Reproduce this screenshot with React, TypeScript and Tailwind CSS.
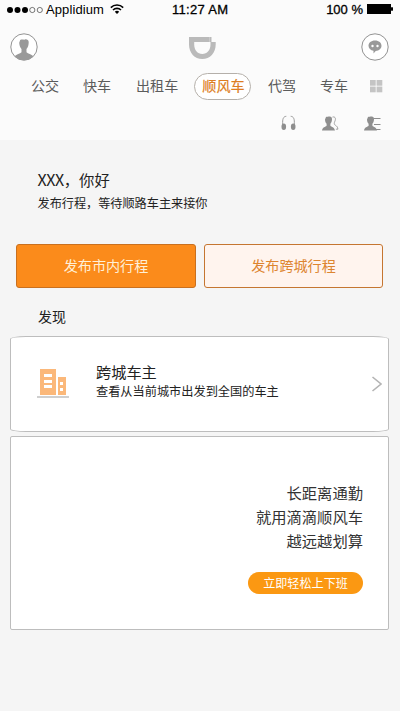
import React from "react";

const cjk = "font-['Noto_Sans_CJK_SC',sans-serif]";
const latin = "font-['Liberation_Sans',Arial,sans-serif]";

function StatusBar() {
  return (
    <div className={`flex h-[19px] items-center pl-[7px] pr-[7px] text-black ${latin}`}>
      <svg width="36" height="8" viewBox="0 0 36 8">
        <circle cx="3" cy="4" r="3" />
        <circle cx="10.5" cy="4" r="3" />
        <circle cx="18" cy="4" r="3" />
        <circle cx="25.3" cy="4" r="2.6" fill="none" stroke="#222" strokeWidth=".6" />
        <circle cx="32.8" cy="4" r="2.6" fill="none" stroke="#222" strokeWidth=".6" />
      </svg>
      <span className="ml-[3px] w-[58px] whitespace-nowrap text-[13px] leading-[19px] tracking-[0.1px]">Applidium</span>
      <svg className="ml-[6px] mb-[1px]" width="14" height="10" viewBox="0 0 14 10" fill="none" stroke="#000" strokeWidth="1.6">
        <path d="M.8 3.6a8.8 8.8 0 0 1 12.4 0" />
        <path d="M3 6a5.7 5.7 0 0 1 8 0" />
        <path d="M7 10 4.8 7.8a3.1 3.1 0 0 1 4.4 0z" fill="#000" stroke="none" />
      </svg>
      <span className="ml-[48px] w-[57px] whitespace-nowrap text-[13px] leading-[19px] tracking-[0.3px] [-webkit-text-stroke:0.3px_#000]">11:27 AM</span>
      <span className="ml-auto whitespace-nowrap text-[13px] leading-[19px] [-webkit-text-stroke:0.3px_#000]">100 %</span>
      <svg className="ml-[4px] mb-[1px]" width="26" height="10" viewBox="0 0 26 10">
        <rect x=".5" y=".5" width="23" height="9" stroke="#000" />
        <rect x="24" y="3.3" width="2" height="3.4" />
      </svg>
    </div>
  );
}

function TopBar() {
  return (
    <div className="flex h-[55px] items-center pl-[10px] pr-[11px]">
      <svg width="28" height="28" viewBox="0 0 28 28">
        <circle cx="14" cy="14" r="13.2" fill="#fff" stroke="#777" strokeWidth=".8" />
        <path d="M10.200 7c2-1 3.600.2 4.600-.4 1.400-.8 4 .2 3.900 2.600 0 3-.8 5.200-2.200 6.800v3.200c1.500 1.700 4.900 1.700 6.900 4a13.200 13.200 0 0 1-18.800 0c2-2.300 5.400-2.300 6.900-4V16c-1.400-1.600-2.200-3.800-2.300-6.200z" fill="#999" />
      </svg>
      <svg className="ml-[151px] mt-[2px]" width="27" height="22" viewBox="0 0 27 22" fill="#bababa">
        <path d="M0 0H20.500V5H5.200V7.500C5.200 13 8.500 17 13.300 17S21.500 13 21.500 7.500V5H26.700V7.500C26.700 16 21 22 13.300 22S0 16 0 7.500Z" />
        <path d="M20.500 0H22.500V5H20.500z" />
      </svg>
      <svg className="ml-auto" width="28" height="28" viewBox="0 0 28 28">
        <circle cx="14" cy="14" r="13.2" fill="#fff" stroke="#777" strokeWidth=".8" />
        <path d="M14 7.500c4 0 6.500 2.300 6.500 5.200 0 2.700-2.400 5-5.800 5.200L12.500 20.500v-2.700C9.500 17.300 7.500 15.200 7.500 12.700 7.500 9.800 10 7.500 14 7.500z" fill="#999" />
        <circle cx="11.500" cy="13" r="1.200" fill="#fff" /><circle cx="16.500" cy="13" r="1.200" fill="#fff" />
      </svg>
    </div>
  );
}

function Tabs() {
  return (
    <nav className="flex h-[24px] items-center pl-[31px] text-[14.100px] leading-[24px] whitespace-nowrap text-[#5c5c5c]">
      <span className="w-[52px] pb-[2px]">公交</span>
      <span className="w-[53px] pb-[2px]">快车</span>
      <span className="w-[58px] pb-[2px]">出租车</span>
      <span className="flex h-[27px] w-[57px] shrink-0 items-center justify-center rounded-full border border-[#b5b0aa] bg-white pb-[2px] pl-[2px] text-[#dd7d22] [-webkit-text-stroke:0.2px_#dd7d22]">顺风车</span>
      <span className="ml-[17px] w-[52px] pb-[2px]">代驾</span>
      <span className="w-[50px] pb-[2px]">专车</span>
      <svg width="13" height="13" viewBox="0 0 13 13" fill="#c4c4c4">
        <rect width="5.700" height="5.700" /><rect x="6.600" width="5.700" height="5.700" />
        <rect y="6.600" width="5.700" height="5.700" /><rect x="6.600" y="6.600" width="5.700" height="5.700" />
      </svg>
    </nav>
  );
}

const bust = "M4 1c1.200-.6 1.800 0 2.800-.4C8.800 0 10.200 1.300 10 3.500c-.1 2-.7 3.300-1.600 4.200v2c1 1.300 4 1.300 4.600 4.800H0c.5-3.500 3.400-3.500 4.600-4.800v-2C3.700 6.800 3 5.500 3 3.500z";

function ToolIcons() {
  return (
    <div className="flex h-[42px] items-center justify-end pr-[19px] pt-[8px]">
      <svg width="15" height="16" viewBox="0 0 15 16" fill="#8e8e8e">
        <ellipse cx="2.800" cy="11.700" rx="2.300" ry="3.200" />
        <ellipse cx="12.200" cy="11.700" rx="2.300" ry="3.200" />
        <path d="M5.300 1.300C2.200 1.500 1.400 4 1.700 9.500M9.700 1.300c3.100.2 3.900 2.700 3.600 8.200" fill="none" stroke="#8e8e8e" strokeWidth=".9" />
      </svg>
      <svg className="ml-[26px]" width="17" height="15" viewBox="0 0 17 15">
        <path d={bust} fill="#8e8e8e" />
        <path d="M10.500 1c3.200-.6 3.400 2 2.400 4.200-.9 1.800-.9 3 .4 4 1.600 1 2.400 1.800 2.600 4h-2" fill="none" stroke="#8e8e8e" strokeWidth=".8" />
      </svg>
      <svg className="ml-[25px]" width="17" height="15" viewBox="0 0 17 15">
        <path d={bust} fill="#8e8e8e" />
        <path d="M9.500 2.500H16.500M10 8.500H16.500M12 13.500H16.500" stroke="#8e8e8e" />
      </svg>
    </div>
  );
}

export default function App() {
  return (
    <div className={`h-[711px] w-[400px] overflow-hidden bg-[#f5f5f5] text-[#222] ${cjk}`}>
      <header className="h-[140px] bg-[#fbfbfb]">
        <StatusBar />
        <TopBar />
        <Tabs />
        <ToolIcons />
      </header>

      <section className="h-[104px] pl-[37.5px] pt-[27px]">
        <h1 className="text-[15.300px] leading-[24px]"><span className="-tracking-[0.4px] text-[16px]">XXX</span>，你好</h1>
        <p className="mt-[1px] text-[12.150px] leading-[22px]">发布行程，等待顺路车主来接你</p>
      </section>

      <div className="flex gap-[8px] pl-[16px] text-[14.100px]">
        <button className="h-[44px] w-[180px] rounded-[3px] border border-[#c9701f] bg-[#fb8b1b] text-[#fff0d8]">发布市内行程</button>
        <button className="h-[44px] w-[179px] rounded-[3px] border border-[#c57631] bg-[#fff4ee] text-[#dd8530]">发布跨城行程</button>
      </div>

      <h2 className="h-[48px] pl-[38px] pt-[16px] text-[14px] leading-[24px]">发现</h2>

      <section className="ml-[10px] flex h-[96px] w-[379px] items-center rounded-[16px/3px] border border-[#bdbdbd] bg-white pl-[26px] pr-[6px]">
        <svg width="32" height="30" viewBox="0 0 32 30">
          <path d="M3 0H19V26H3zM21 8H29V26H21z" fill="#fbb87a" />
          <path d="M7 5H15V8H7zM7 11H15V14H7zM7 16H15V19H7zM23 13H26V16H23zM23 19H26V22H23z" fill="#fff" />
          <path d="M0 27H32V29H0z" fill="#cfcfcf" />
        </svg>
        <div className="ml-[27px] whitespace-nowrap pb-[7px]">
          <h3 className="text-[15.200px] leading-[20px]">跨城车主</h3>
          <p className="text-[12.200px] leading-[20px]">查看从当前城市出发到全国的车主</p>
        </div>
        <svg className="ml-auto" width="11" height="16" viewBox="0 0 11 16" fill="none" stroke="#b4b4b4" strokeWidth="1.600">
          <path d="M1.500 1 10 8 1.500 15" />
        </svg>
      </section>

      <section className="ml-[10px] mt-[4px] flex h-[194px] w-[379px] flex-col items-end rounded-[2px] border border-[#bdbdbd] bg-white pr-[25px] pt-[43px]">
        <p className="text-right text-[15.300px] leading-[24px] text-[#333]">长距离通勤<br />就用滴滴顺风车<br />越远越划算</p>
        <button className="mt-[20px] h-[22px] w-[115px] rounded-full bg-[#fb9812] text-[12.100px] leading-[22px] text-white">立即轻松上下班</button>
      </section>
    </div>
  );
}
